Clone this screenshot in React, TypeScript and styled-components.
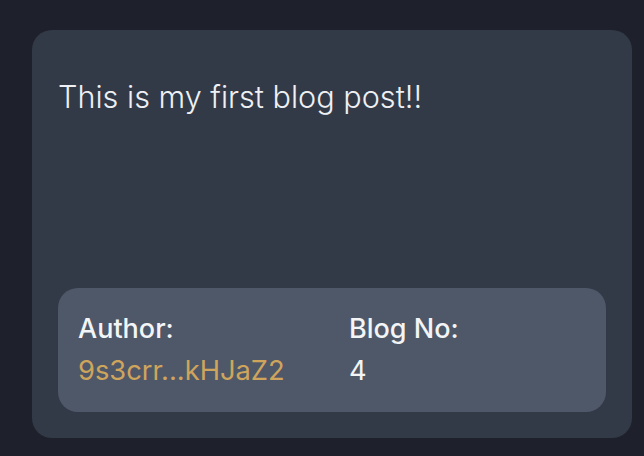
import React from "react";
import styled, { createGlobalStyle } from "styled-components";

const Global = createGlobalStyle`
  html, body { margin: 0; padding: 0; background: #1e212b; }
  body { font-family: Inter, "Noto Sans", sans-serif; -webkit-font-smoothing: antialiased; }
`;

const Page = styled.div`
  width: 644px;
  height: 456px;
  padding: 30px 12px 0 32px;
  box-sizing: border-box;
  background: #1e212b;
`;

const Card = styled.article`
  width: 600px;
  height: 408px;
  box-sizing: border-box;
  background: #323a48;
  border-radius: 20px;
  padding: 26px;
  display: flex;
  flex-direction: column;
  justify-content: space-between;
`;

const Body = styled.p`
  margin: 0;
  padding-top: 23px;
  font-size: 30.6px;
  font-weight: 300;
  line-height: 36px;
  color: #eef0f4;
`;

const Meta = styled.div`
  height: 124px;
  box-sizing: border-box;
  background: #4f5869;
  border-radius: 20px;
  padding: 20px 20px;
  display: grid;
  grid-template-columns: 271px 1fr;
`;

const Field = styled.div`
  display: flex;
  flex-direction: column;
`;

const Label = styled.span`
  font-size: 27px;
  font-weight: 500;
  line-height: 42px;
  color: #f3f4f6;
`;

const Value = styled.span<{ $accent?: boolean }>`
  font-size: 27.3px;
  font-weight: 400;
  line-height: 42px;
  color: ${(p) => (p.$accent ? "#cfa55c" : "#f3f4f6")};
`;

export default function App() {
  return (
    <>
      <Global />
      <Page>
        <Card>
          <Body>This is my first blog post!!</Body>
          <Meta>
            <Field>
              <Label>Author:</Label>
              <Value $accent>9s3crr...kHJaZ2</Value>
            </Field>
            <Field>
              <Label>Blog No:</Label>
              <Value>4</Value>
            </Field>
          </Meta>
        </Card>
      </Page>
    </>
  );
}
